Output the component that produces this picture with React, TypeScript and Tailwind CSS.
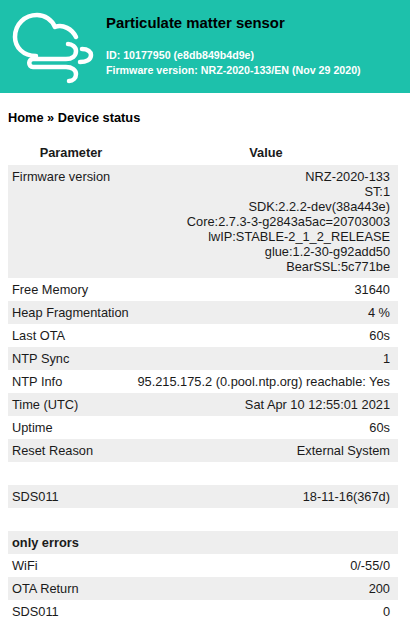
const rows: { label?: string; value?: string[]; bold?: boolean }[] = [
  {
    label: "Firmware version",
    value: [
      "NRZ-2020-133",
      "ST:1",
      "SDK:2.2.2-dev(38a443e)",
      "Core:2.7.3-3-g2843a5ac=20703003",
      "lwIP:STABLE-2_1_2_RELEASE",
      "glue:1.2-30-g92add50",
      "BearSSL:5c771be",
    ],
  },
  { label: "Free Memory", value: ["31640"] },
  { label: "Heap Fragmentation", value: ["4 %"] },
  { label: "Last OTA", value: ["60s"] },
  { label: "NTP Sync", value: ["1"] },
  { label: "NTP Info", value: ["95.215.175.2 (0.pool.ntp.org) reachable: Yes"] },
  { label: "Time (UTC)", value: ["Sat Apr 10 12:55:01 2021"] },
  { label: "Uptime", value: ["60s"] },
  { label: "Reset Reason", value: ["External System"] },
  {},
  { label: "SDS011", value: ["18-11-16(367d)"] },
  {},
  { label: "only errors", bold: true },
  { label: "WiFi", value: ["0/-55/0"] },
  { label: "OTA Return", value: ["200"] },
  { label: "SDS011", value: ["0"] },
];

function Logo() {
  return (
    <svg width="84" height="72" viewBox="12 12 84 72" fill="none" stroke="white" strokeWidth="4.5" strokeLinecap="round" strokeLinejoin="round" className="shrink-0">
      <path d="M36 56C23 56 15 47 15 37C15 24 25 15 37 15C45 15 52 20 55 27C63 24 72 29 76 37" />
      <path d="M68 44C72 44 76 47 76 51C76 56 72 59 66 59H33C28 59 28 67 33 67H66C72 67 76 70 76 74C76 78 73 81 69 81" />
      <path d="M82 49C88 49 91 52 91 55C91 60 86 62 80 62" />
    </svg>
  );
}

export default function App() {
  return (
    <div className="h-[625px] w-[410px] overflow-hidden bg-white font-['Liberation_Sans',Arial,sans-serif] text-[12.8px] leading-[15px] text-[#1a1a1a]">
      <header className="flex h-[93px] items-start bg-[#1dc1ab]">
        <div className="ml-[12px] mt-[12px]">
          <Logo />
        </div>
        <div className="ml-[10px] pt-[15px]">
          <h1 className="text-[14.9px] leading-[16px] font-bold text-black">Particulate matter sensor</h1>
          <div className="mt-[17px] text-[10.67px] leading-[15px] font-bold text-white">
            <div>ID: 10177950 (e8db849b4d9e)</div>
            <div>Firmware version: NRZ-2020-133/EN (Nov 29 2020)</div>
          </div>
        </div>
      </header>

      <main className="px-[8px]">
        <h2 className="mt-[17px] text-[12.8px] leading-[16px] font-bold text-black">Home » Device status</h2>

        <div className="mt-[19px] flex h-[16px] font-bold">
          <div className="w-[126px] text-center">Parameter</div>
          <div className="w-[264px] text-center">Value</div>
        </div>

        <div className="mt-[4px] w-[390px]">
          {rows.map((r, i) => (
            <div key={i} className={`flex justify-between pt-[4px] pr-[8px] pb-[4px] pl-[4px] ${i % 2 === 0 && r.label ? "bg-[#eeeeee]" : ""}`}>
              <div className={r.bold ? "font-bold" : ""}>{r.label ?? "\u00a0"}</div>
              {r.value && (
                <div className="text-right">
                  {r.value.map((line) => (
                    <div key={line} className="leading-[15px]">{line}</div>
                  ))}
                </div>
              )}
            </div>
          ))}
        </div>
      </main>
    </div>
  );
}
